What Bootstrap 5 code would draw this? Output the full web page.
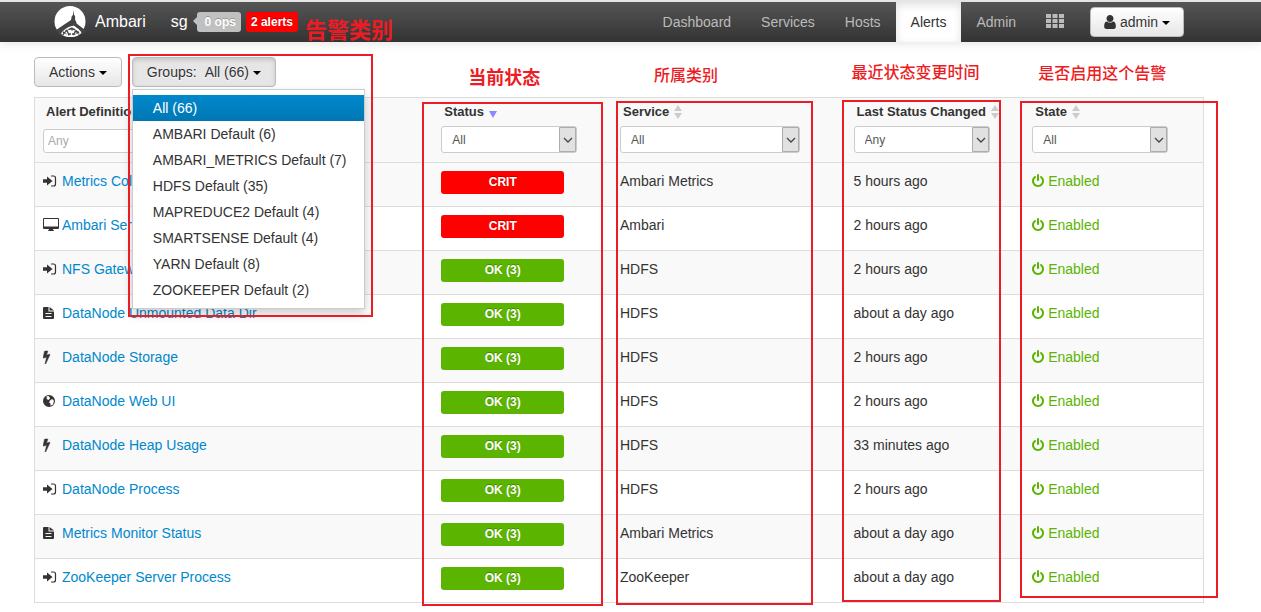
<!DOCTYPE html>
<html lang="en">
<head>
<meta charset="utf-8">
<meta name="viewport" content="width=device-width, initial-scale=1">
<title>Ambari - Alerts</title>
<link href="https://cdn.jsdelivr.net/npm/bootstrap@5.3.0/dist/css/bootstrap.min.css" rel="stylesheet">
<style>
  body { font-family: "Liberation Sans", Arial, sans-serif; font-size: 14px; line-height: 20px; color: #333; background: #fff; border-top: 2px solid #e3e5e6; }
  a { color: #0088cc; text-decoration: none; }
  .topbar { height: 40px; padding: 0 77px 0 54px; background: linear-gradient(#555, #333); box-shadow: 0 1px 10px rgba(0,0,0,.12); }
  .brand-text { font-size: 16px; color: #fff; }
  .brand-name { margin: 0 25px 0 9px; }
  .pill { font-size: 12px; font-weight: bold; line-height: 20px; border-radius: 3px; color: #fff; text-shadow: 0 -1px 0 rgba(0,0,0,.25); }
  .pill-ops { background: #c0c0c0; position: relative; margin-left: 9px; padding: 0 5px 0 8px; }
  .pill-ops::before { content: ""; position: absolute; left: -4px; top: 5px; border: 4px solid transparent; border-left: 0; border-right-color: #b9c4d0; }
  .pill-alerts { background: #f00; padding: 0 5px; margin-left: 5px; }
  .pill:hover { color: #fff; }
  .topbar .nav-link { color: #bbb; padding: 10px 15px; line-height: 20px; }
  .topbar .nav-link.active { color: #333; background: #fff; box-shadow: inset 0 3px 8px rgba(0,0,0,.125); }
  .tool { font-size: 14px; line-height: 20px; padding: 4px 14px; color: #333; border: 1px solid #bbb; border-radius: 4px; background: linear-gradient(#fff, #e6e6e6); text-shadow: 0 1px 1px rgba(255,255,255,.75); }
  .tool.pressed { background: #e6e6e6; box-shadow: inset 0 2px 4px rgba(0,0,0,.15); }
  .tool-user { padding: 4px 13px; margin-left: 11px; }
  .tri { display: inline-block; border: 4px solid transparent; border-top-color: #000; border-bottom: 0; vertical-align: middle; }
  .page { padding: 15px 57px 10px 34px; }
  .toolbar { gap: 10px; }
  .group-menu { display: block; top: 32px; left: 0; width: 233px; padding: 5px 0; margin: 0; border: 1px solid #ccc; border-radius: 0; box-shadow: 0 5px 10px rgba(0,0,0,.2); font-size: 14px; z-index: 5; }
  .group-menu .dropdown-item { color: #333; padding: 3px 20px; line-height: 20px; }
  .group-menu .dropdown-item.active { color: #fff; background: linear-gradient(#0088cc, #0077b3); }
  .alerts { table-layout: fixed; width: 100%; margin-top: 10px; border: 1px solid #ddd; border-collapse: separate; border-spacing: 0; }
  .alerts th { position: relative; height: 64px; padding: 4px 8px 0; vertical-align: top; background: #f9f9f9; white-space: nowrap; }
  .alerts td { height: 44px; padding: 8px 8px 0; vertical-align: top; border-top: 1px solid #ddd; white-space: nowrap; }
  .alerts tbody tr:nth-child(odd) td { background: #f9f9f9; }
  .head-label { display: block; padding-left: 3px; font-size: 13px; }
  .field { display: block; height: 27px; margin-top: 4px; font-size: 12px; color: #555; border: 1px solid #ccc; border-radius: 3px; background: #fff; }
  .field-text { height: 24px; margin-top: 7px; padding: 0 4px; width: 200px; }
  .field-text::placeholder { color: #aaa; opacity: 1; }
  .pick { position: relative; width: 136px; }
  .pick-wide { width: 180px; }
  .pick .field { appearance: none; width: 100%; padding: 0 10px; }
  .pick svg { position: absolute; right: 0; top: 0; }
  .state { display: block; width: 123px; height: 23px; line-height: 22px; border-radius: 3px; font-size: 12px; font-weight: bold; text-align: center; color: #fff; text-shadow: 0 -1px 0 rgba(0,0,0,.25); }
  .state-crit { background: #f00; }
  .state-ok { background: #5ab400; }
  .enabled, .enabled:hover { color: #5ab400; }
  .ic { width: 12px; height: 14px; fill: currentColor; vertical-align: -2px; }
  .ic-type { width: 16px; margin-right: 3px; color: #333; }
  .sorter { width: 8px; height: 14px; margin-left: 1px; vertical-align: -3px; fill: #ccc; }
  .sorter-on { fill: #8a8aff; }
  /* red review marks over the page */
  .mark-box { position: absolute; border: 2px solid #ed1c24; z-index: 6; pointer-events: none; }
  .mark-text { position: absolute; color: #ed1c24; font-family: "Liberation Sans", "Noto Sans CJK SC", sans-serif; font-weight: 500; font-size: 16px; line-height: 20px; white-space: nowrap; }
  .mark-groups { left: -4px; top: -3px; width: 245px; height: 263px; }
  .mark-status { left: -11px; top: 4px; width: 181px; height: 504px; }
  .mark-service { left: 4px; top: 3px; width: 197px; height: 504px; }
  .mark-last { left: -4px; top: 2px; width: 159px; height: 502px; }
  .mark-state { left: -4px; top: 3px; width: 198px; height: 497px; }
  .note-groups { left: 305px; top: 20px; font-size: 22px; line-height: 22px; font-weight: bold; }
  .note-status { left: 35px; top: -30px; font-size: 18px; font-weight: bold; }
  .note-service { left: 42px; top: -32px; }
  .note-last { left: 6px; top: -35px; }
  .note-state { left: 14px; top: -34px; }
</style>
</head>
<body>
<svg class="d-none" aria-hidden="true">
  <symbol id="i-signin" viewBox="0 0 14 14" preserveAspectRatio="xMinYMid"><path d="M0 5.200h4V2.500L9.500 7 4 11.500V8.800H0z"/><path d="M8 2h2.500q2 0 2 2v6q0 2-2 2H8" fill="none" stroke="currentColor" stroke-width="1.200"/></symbol>
  <symbol id="i-power" viewBox="128 0 1536 1792"><path d="M1664 896q0 156-61 298t-164 245-245 164-298 61-298-61-245-164-164-245-61-298q0-182 80.500-343t226.500-270q43-32 95.500-25t83.500 50q32 42 24.500 94.500t-49.500 84.500q-98 74-151.500 181t-53.500 228q0 104 40.500 198.500t109.500 163.500 163.500 109.500 198.500 40.500 198.500-40.500 163.500-109.500 109.500-163.500 40.500-198.500q0-121-53.500-228t-151.500-181q-42-32-49.500-84.500t24.500-94.500q31-43 84-50t95 25q146 109 226.500 270t80.500 343zm-640-768v640q0 52-38 90t-90 38-90-38-38-90v-640q0-52 38-90t90-38 90 38 38 90z"/></symbol>
  <symbol id="i-bolt" viewBox="448 0 1792 1792" preserveAspectRatio="xMinYMid"><path d="M1333 566q18 20 7 44l-540 1157q-13 25-42 25-4 0-14-2-17-5-25.500-19t-4.500-30l197-808-406 101q-4 1-12 1-18 0-31-11-18-15-13-39l201-825q4-14 16-23t28-9h328q19 0 32 12.500t13 29.500q0 8-5 18l-171 463 396-98q8-2 12-2 19 0 34 15z" stroke="currentColor" stroke-width="60"/></symbol>
  <symbol id="i-user" viewBox="256 128 1280 1536"><path d="M1536 1399q0 109-62.500 187t-150.500 78h-854q-88 0-150.500-78t-62.500-187q0-85 8.500-160.500t31.500-152 58.500-131 94-89 134.500-34.500q131 128 313 128t313-128q76 0 134.500 34.500t94 89 58.500 131 31.500 152 8.500 160.500zm-256-887q0 159-112.500 271.500t-271.500 112.500-271.500-112.500-112.500-271.500 112.500-271.500 271.500-112.500 271.500 112.500 112.500 271.500z"/></symbol>
  <symbol id="i-desktop" viewBox="0 0 16 14" preserveAspectRatio="xMinYMid"><path fill-rule="evenodd" d="M1 0h14q1 0 1 1v9q0 1-1 1h-5q0 1 1 1.500v.5H5v-.5q1-.5 1-1.500H1q-1 0-1-1V1q0-1 1-1zm0 1v7.500h14V1z"/></symbol>
  <symbol id="i-file" viewBox="1 0 14 14" preserveAspectRatio="xMinYMid"><path fill-rule="evenodd" d="M2 1h4.500v4.500H12V12q0 1-1 1H2q-1 0-1-1V2q0-1 1-1zm5.500 0L12 4.500H7.500zM3.500 7v1h6V7zm0 3v1h6v-1z"/></symbol>
  <symbol id="i-globe" viewBox="1 0 14 14" preserveAspectRatio="xMinYMid"><path fill-rule="evenodd" d="M7 1a6 6 0 1 1 0 12A6 6 0 1 1 7 1zM6.500 2Q5 2 4 3l1 .5-.5 1.500 2 1L8 4.500 7.500 3zM8 6.500l-1 2 1.500 1v2.300l2.500-1.300.5-2L12 7l-1-1.500-1.500-.2z"/></symbol>
  <symbol id="i-sort" viewBox="0 0 8 14"><path d="M4 0l4 6H0zM4 14L0 8h8z"/></symbol>
  <symbol id="i-drop" viewBox="0 0 18 27"><path d="M.5 1.500h16v24H.5z" fill="#e1e1e1" stroke="#adadad"/><path d="M5 12l4 4 4-4" fill="none" stroke="#444" stroke-width="1.300"/></symbol>
</svg>

<header class="topbar d-flex align-items-center">
  <a href="#" class="d-flex align-items-center" aria-label="Ambari home">
    <svg width="32" height="32" viewBox="0 0 32 32"><circle cx="16" cy="15.500" r="15.500" fill="#fff"/><path d="M19.500 4l.6 5 1 1v4l1 1.500.5 2 9 7-1.500 4L21 20.500l-1.500-1-2 1L6 30l-4-6 10.500-7 4.500-3 .8-4 1.200-1z" fill="#444"/><path d="M7 27.500q4-6 11-7.500 6 1 9.500 7-4 4-10 4T7 27.500z" fill="#fff"/><path d="M9 29q2-5 8.500-6.500 5 1 7.500 6M13 24.500l2 5M18 21.500v4M22 24.500l-3 4.500M9 26l4 2M14 28h7M25 26l-4 2" fill="none" stroke="#444" stroke-width="1.400" stroke-dasharray="3 1"/></svg>
    <span class="brand-text brand-name">Ambari</span>
  </a>
  <a href="#" class="brand-text">sg</a>
  <a href="#" class="pill pill-ops">0 ops</a>
  <a href="#" class="pill pill-alerts">2 alerts</a>
  <nav class="nav ms-auto align-items-center flex-nowrap">
    <a class="nav-link" href="#">Dashboard</a>
    <a class="nav-link" href="#">Services</a>
    <a class="nav-link" href="#">Hosts</a>
    <a class="nav-link active" href="#">Alerts</a>
    <a class="nav-link" href="#">Admin</a>
    <a class="nav-link d-flex" href="#" aria-label="Views"><svg width="18" height="20" viewBox="0 0 18 20" fill="#bbb"><path d="M0 2h5v4H0zm6.500 0h5v4h-5zM13 2h5v4h-5zM0 7h5v4H0zm6.500 0h5v4h-5zM13 7h5v4h-5zM0 12h5v4H0zm6.500 0h5v4h-5zM13 12h5v4h-5z"/></svg></a>
    <button type="button" class="tool tool-user"><svg class="ic"><use href="#i-user"/></svg> admin <span class="tri"></span></button>
  </nav>
</header>
<div class="mark-text note-groups">告警类别</div>

<main class="page">
  <div class="toolbar d-flex">
    <button type="button" class="tool">Actions <span class="tri"></span></button>
    <div class="dropdown position-relative">
      <button type="button" class="tool pressed" aria-expanded="true">Groups:<span class="ms-2">All (66)</span> <span class="tri"></span></button>
      <div class="dropdown-menu group-menu">
        <a class="dropdown-item active" href="#">All (66)</a>
        <a class="dropdown-item" href="#">AMBARI Default (6)</a>
        <a class="dropdown-item" href="#">AMBARI_METRICS Default (7)</a>
        <a class="dropdown-item" href="#">HDFS Default (35)</a>
        <a class="dropdown-item" href="#">MAPREDUCE2 Default (4)</a>
        <a class="dropdown-item" href="#">SMARTSENSE Default (4)</a>
        <a class="dropdown-item" href="#">YARN Default (8)</a>
        <a class="dropdown-item" href="#">ZOOKEEPER Default (2)</a>
      </div>
      <div class="mark-box mark-groups"></div>
    </div>
  </div>

  <table class="alerts">
    <colgroup><col style="width:34.100%"><col style="width:15.300%"><col style="width:20%"><col style="width:15.300%"><col></colgroup>
    <thead>
      <tr>
        <th><label class="head-label" for="f-name">Alert Definition Name</label><input id="f-name" class="field field-text" type="text" placeholder="Any"></th>
        <th><label class="head-label" for="f-status">Status <svg class="sorter sorter-on"><path d="M0 6h8l-4 7z"/></svg></label>
          <div class="pick"><select id="f-status" class="field"><option>All</option></select><svg width="18" height="27"><use href="#i-drop"/></svg></div>
          <div class="mark-box mark-status"></div><span class="mark-text note-status">当前状态</span></th>
        <th><label class="head-label" for="f-service">Service <svg class="sorter"><use href="#i-sort"/></svg></label>
          <div class="pick pick-wide"><select id="f-service" class="field"><option>All</option></select><svg width="18" height="27"><use href="#i-drop"/></svg></div>
          <div class="mark-box mark-service"></div><span class="mark-text note-service">所属类别</span></th>
        <th><label class="head-label" for="f-last">Last Status Changed <svg class="sorter"><use href="#i-sort"/></svg></label>
          <div class="pick"><select id="f-last" class="field"><option>Any</option></select><svg width="18" height="27"><use href="#i-drop"/></svg></div>
          <div class="mark-box mark-last"></div><span class="mark-text note-last">最近状态变更时间</span></th>
        <th><label class="head-label" for="f-state">State <svg class="sorter"><use href="#i-sort"/></svg></label>
          <div class="pick"><select id="f-state" class="field"><option>All</option></select><svg width="18" height="27"><use href="#i-drop"/></svg></div>
          <div class="mark-box mark-state"></div><span class="mark-text note-state">是否启用这个告警</span></th>
      </tr>
    </thead>
    <tbody id="rows"></tbody>
  </table>
</main>

<script src="https://cdn.jsdelivr.net/npm/bootstrap@5.3.0/dist/js/bootstrap.bundle.min.js"></script>
<script>
  const alerts = [
    ['signin', 'Metrics Collector Process', 'CRIT', 'Ambari Metrics', '5 hours ago'],
    ['desktop', 'Ambari Server Alerts', 'CRIT', 'Ambari', '2 hours ago'],
    ['signin', 'NFS Gateway Process', 'OK (3)', 'HDFS', '2 hours ago'],
    ['file', 'DataNode Unmounted Data Dir', 'OK (3)', 'HDFS', 'about a day ago'],
    ['bolt', 'DataNode Storage', 'OK (3)', 'HDFS', '2 hours ago'],
    ['globe', 'DataNode Web UI', 'OK (3)', 'HDFS', '2 hours ago'],
    ['bolt', 'DataNode Heap Usage', 'OK (3)', 'HDFS', '33 minutes ago'],
    ['signin', 'DataNode Process', 'OK (3)', 'HDFS', '2 hours ago'],
    ['file', 'Metrics Monitor Status', 'OK (3)', 'Ambari Metrics', 'about a day ago'],
    ['signin', 'ZooKeeper Server Process', 'OK (3)', 'ZooKeeper', 'about a day ago']
  ];
  document.getElementById('rows').innerHTML = alerts.map(([icon, name, status, service, changed]) => `
    <tr>
      <td><svg class="ic ic-type"><use href="#i-${icon}"/></svg><a href="#">${name}</a></td>
      <td><span class="state ${status === 'CRIT' ? 'state-crit' : 'state-ok'}">${status}</span></td>
      <td>${service}</td>
      <td>${changed}</td>
      <td><a href="#" class="enabled"><svg class="ic"><use href="#i-power"/></svg> Enabled</a></td>
    </tr>`).join('');
</script>
</body>
</html>
